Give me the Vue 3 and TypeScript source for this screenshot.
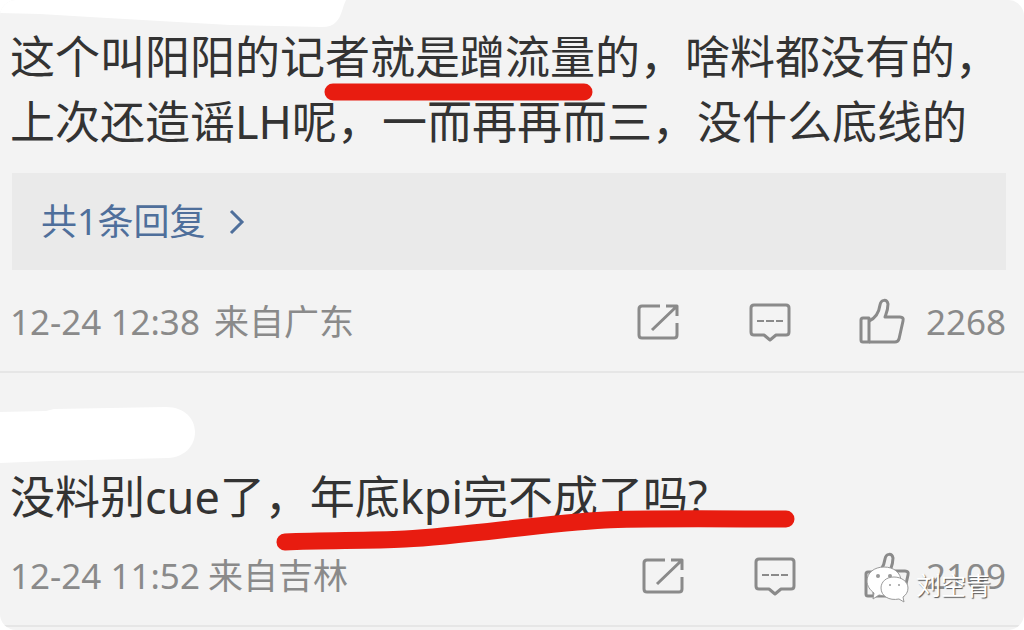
<script setup lang="ts">
interface Comment {
  id: number
  text: string
  replies?: string
  time: string
  place: string
  likes: string
  strokeClass: string
  strokeBox: string
  strokePath: string
}

const comments: Comment[] = [
  {
    id: 1,
    text: '这个叫阳阳的记者就是蹭流量的，啥料都没有的，上次还造谣LH呢，一而再再而三，没什么底线的',
    replies: '共1条回复',
    time: '12-24 12:38',
    place: '来自广东',
    likes: '2268',
    strokeClass: 'stroke-one',
    strokeBox: '0 0 270 20',
    strokePath: 'M9 10 L260 10',
  },
  {
    id: 2,
    text: '没料别cue了，年底kpi完不成了吗?',
    time: '12-24 11:52',
    place: '来自吉林',
    likes: '2109',
    strokeClass: 'stroke-two',
    strokeBox: '0 0 520 44',
    strokePath: 'M10 33 C50 31 90 32 130 30 C190 27 270 14 330 11 C360 9 460 10 511 10',
  },
]
</script>

<template>
  <main class="page">
    <svg class="smudge smudge-top" viewBox="0 0 346 28" aria-hidden="true">
      <path d="M0 0H346C342 8 342 16 336 22Q332 27 322 27L230 25L90 17L40 14L0 13Z" fill="#fff" />
    </svg>

    <article v-for="c in comments" :key="c.id" class="comment" :class="{ second: c.id === 2 }">
      <svg v-if="c.id === 2" class="smudge smudge-name" viewBox="0 0 198 60" aria-hidden="true">
        <path d="M0 6L46 5L54 3L166 1C184 1 195 12 195 26C195 40 185 51 168 52L90 54L50 55L0 57Z" fill="#fff" />
      </svg>

      <div class="body">
        <p class="text">{{ c.text }}</p>
        <svg class="stroke" :class="c.strokeClass" :viewBox="c.strokeBox" aria-hidden="true">
          <path :d="c.strokePath" />
        </svg>
      </div>

      <a v-if="c.replies" class="replies" href="#">
        <span>{{ c.replies }}</span>
        <svg class="chevron" viewBox="0 0 18 28" aria-hidden="true">
          <path d="M3 3L14 14L3 25" />
        </svg>
      </a>

      <footer class="meta">
        <time>{{ c.time }}</time>
        <span class="place">{{ c.place }}</span>
        <div class="actions">
          <button type="button" class="icon-button" aria-label="转发">
            <svg class="icon" viewBox="0 0 44 44">
              <path d="M24 6H6Q3 6 3 9V35Q3 38 6 38H38Q41 38 41 35V23M30 6H41V16M40 7L16 30" />
            </svg>
          </button>
          <button type="button" class="icon-button" aria-label="评论">
            <svg class="icon" viewBox="0 0 44 44">
              <path d="M6 5H38Q41 5 41 8V32Q41 35 38 35H28L22 40L16 35H6Q3 35 3 32V8Q3 5 6 5Z" />
              <path class="thin" d="M9 21H16M18 21H26M28 21H35" />
            </svg>
          </button>
          <button type="button" class="icon-button like">
            <svg class="icon like-icon" viewBox="3 -1 48 48">
              <path d="M4 21Q4 19 6 19H12V43H6Q4 43 4 41Z" />
              <path d="M12 22C19 19 22 13 23 6C24 0 30 0 31 5C31 11 29 15 28 18H43Q47 18 46 22L42 40Q41 43 38 43H12" />
            </svg>
            <span>{{ c.likes }}</span>
          </button>
        </div>
      </footer>
    </article>

    <div class="watermark">
      <svg class="wechat" viewBox="0 0 44 38" aria-hidden="true">
        <path d="M18 1C8 1 1 7 1 15C1 20 4 24 8 27L7 33L13 29C23 32 35 26 35 15C35 7 28 1 18 1Z" />
        <circle cx="12" cy="10" r="2" />
        <circle cx="24" cy="10" r="2" />
        <path d="M28 11C20 11 15 16 15 22C15 30 23 35 33 33L38 36L37 31C40 29 42 26 42 22C42 16 36 11 28 11Z" />
        <circle cx="24" cy="19" r="1" />
        <circle cx="33" cy="19" r="1" />
      </svg>
      <span>刘空青</span>
    </div>
  </main>
</template>

<style>
body {
  margin: 0;
  background: #fff;
}
</style>

<style scoped>
.page {
  position: relative;
  overflow: hidden;
  padding-bottom: 3px;
  border-radius: 16px;
  background: #f3f3f3;
  color: #333;
  font-family: "Noto Sans", "Noto Sans CJK SC", sans-serif;
}

.comment {
  position: relative;
  padding: 24px 10px 24px;
  border-bottom: 2px solid #e6e6e6;
}

.second {
  padding-top: 91px;
}

.body {
  position: relative;
}

.text {
  margin: 0;
  font-size: 45px;
  line-height: 65px;
}

.smudge,
.stroke {
  position: absolute;
  pointer-events: none;
}

.smudge-top {
  top: 0;
  left: 0;
  width: 346px;
  height: 28px;
}

.smudge-name {
  top: 33px;
  left: 0;
  width: 198px;
  height: 60px;
}

.stroke {
  fill: none;
  stroke: #e81c10;
  stroke-width: 17;
  stroke-linecap: round;
}

.stroke-one {
  top: 58px;
  left: 314px;
  width: 270px;
  height: 20px;
}

.stroke-two {
  top: 45px;
  left: 265px;
  width: 520px;
  height: 44px;
}

.replies {
  display: flex;
  align-items: center;
  gap: 22px;
  margin: 19px 8px 0 2px;
  padding: 0 29px;
  background: #eaeaea;
  color: #4f6f9b;
  font-size: 36px;
  line-height: 97px;
  text-decoration: none;
}

.chevron {
  width: 18px;
  height: 28px;
  fill: none;
  stroke: currentColor;
  stroke-width: 3;
}

.meta {
  display: flex;
  align-items: center;
  height: 50px;
  color: #8a8a8a;
  font-size: 35px;
  line-height: 50px;
}

.replies + .meta {
  margin-top: 27px;
}

.second .meta {
  margin-top: 22px;
}

.place {
  margin-left: 14px;
}

.second .place {
  margin-left: 8px;
}

.actions {
  display: flex;
  align-items: center;
  gap: 68px;
  margin-left: auto;
  padding-right: 8px;
}

.icon-button {
  display: flex;
  align-items: center;
  padding: 0;
  border: 0;
  background: none;
  color: inherit;
  font: inherit;
}

.like {
  gap: 18px;
}

.second .like {
  gap: 13px;
}

.icon {
  overflow: visible;
  width: 44px;
  height: 44px;
  fill: none;
  stroke: currentColor;
  stroke-width: 3;
  stroke-linejoin: round;
}

.like-icon {
  width: 48px;
  height: 48px;
}

.thin {
  stroke-width: 2;
}

.watermark {
  position: absolute;
  right: 33px;
  bottom: 26px;
  display: flex;
  align-items: center;
  gap: 6px;
  color: #fff;
  font-size: 25px;
  line-height: 38px;
  text-shadow: 1px 1px 1px #555;
}

.wechat {
  width: 44px;
  height: 38px;
  fill: #fff;
  stroke: #999;
  stroke-width: 1;
}

.wechat circle {
  fill: #999;
  stroke: none;
}
</style>
